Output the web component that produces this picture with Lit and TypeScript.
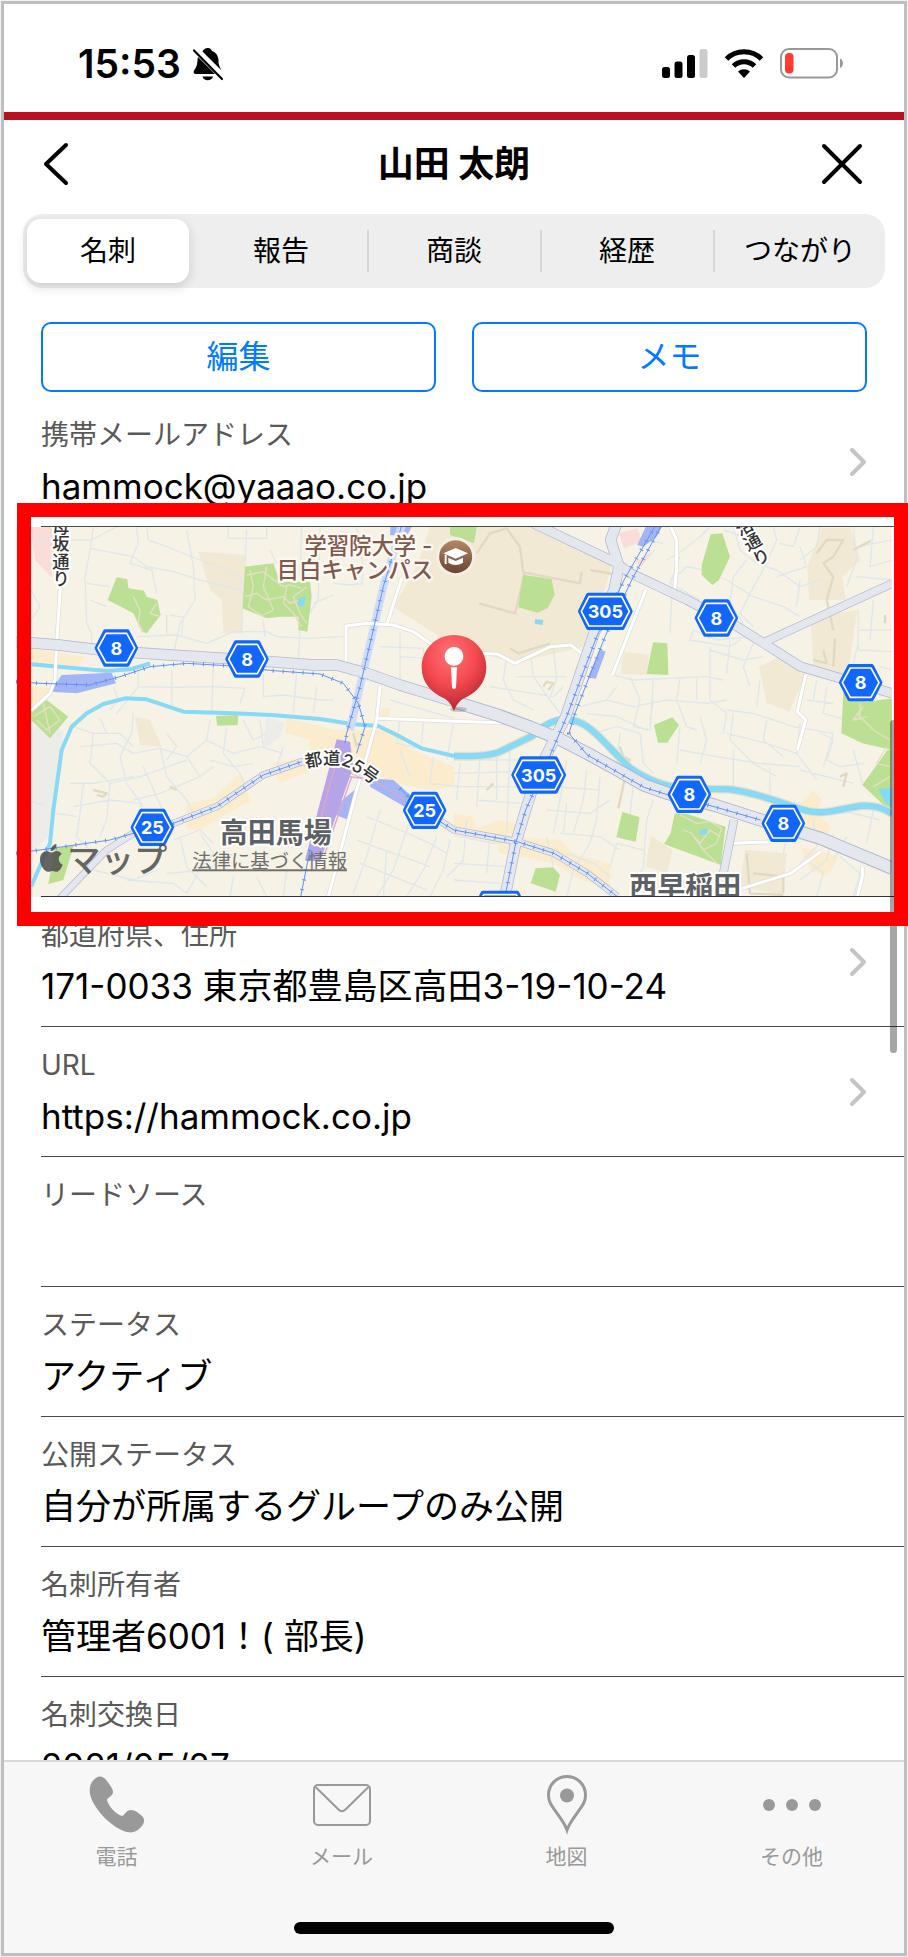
import { LitElement, html, svg, css, nothing } from "lit";
import { customElement, state } from "lit/decorators.js";

interface Field {
  label: string;
  value: string;
  href?: string;
}

interface Shield {
  x: number;
  y: number;
  text: string;
}

const TABS = ["名刺", "報告", "商談", "経歴", "つながり"];

const FIELDS_BEFORE_MAP: Field[] = [
  { label: "携帯メールアドレス", value: "hammock@yaaao.co.jp", href: "mailto:hammock@yaaao.co.jp" },
];

const FIELDS_AFTER_MAP: Field[] = [
  { label: "都道府県、住所", value: "171-0033 東京都豊島区高田3-19-10-24", href: "#address" },
  { label: "URL", value: "https://hammock.co.jp", href: "https://hammock.co.jp" },
  { label: "リードソース", value: "" },
  { label: "ステータス", value: "アクティブ" },
  { label: "公開ステータス", value: "自分が所属するグループのみ公開" },
  { label: "名刺所有者", value: "管理者6001！( 部長)" },
  { label: "名刺交換日", value: "2021/05/27" },
];

const SHIELDS: Shield[] = [
  { x: 349, y: 444, text: "8" },
  { x: 741, y: 477, text: "8" },
  { x: 1816, y: 334, text: "305" },
  { x: 2149, y: 354, text: "8" },
  { x: 2582, y: 548, text: "8" },
  { x: 457, y: 982, text: "25" },
  { x: 1274, y: 931, text: "25" },
  { x: 1616, y: 825, text: "305" },
  { x: 2068, y: 883, text: "8" },
  { x: 2350, y: 970, text: "8" },
  { x: 1500, y: 1228, text: "305" },
];

// Campus and school grounds
const SAND = [
  "M1250 200 1290 81H1600L1835 195 1820 250 1750 440 1547 488 1362 440 1180 320Z",
  "M595 155 740 165 725 400H670L665 300 630 270Z",
  "M2467 85H2552L2582 180 2527 230 2537 300H2427L2422 200Z",
  "M2432 350 2572 330 2540 545 2440 500Z",
  "M2277 500 2340 470 2420 520 2367 635 2300 610Z",
  "M1872 455 1947 465 1942 525 1862 522Z",
  "M405 650 450 660 485 740 420 735Z",
  "M1952 1005 2017 1050 2002 1120 1937 1100Z",
  "M2235 1050 2360 1060 2350 1185 2220 1160Z",
];

// Shopping districts
const ORANGE = [
  "M93 445 255 470 230 505 93 490Z",
  "M93 560 160 565 130 620 93 630Z",
  "M860 655 1010 690 1180 690 1225 745 1362 800V860L1300 870 1180 850 1090 810 960 800 840 850 810 790 925 770 930 720 855 700Z",
  "M560 910 640 895 720 820 740 860 750 905 700 930 600 990 560 985Z",
  "M1362 940 1420 950 1430 985 1500 960 1570 975 1560 1010 1680 1020 1720 1060 1830 1090 1830 1160 1740 1140 1660 1090 1500 1060 1490 1030 1362 1010Z",
  "M2400 910 2440 870 2465 900 2450 940 2495 980 2480 1010 2410 1000Z",
  "M2400 1040 2520 1070 2480 1130 2430 1110Z",
  "M1145 620 1172 625 1168 650 1140 648Z",
];

const PINK = [
  "M93 81H155L162 130 155 232 105 180Z",
  "M1857 100 1912 85 1927 125 1872 145Z",
  "M1907 185 1965 150 1922 202Z",
];

const PARKS = [
  "M350 232 382 238 385 265 432 272 440 290 472 300 482 345 440 400 425 395 400 340 323 300Z",
  "M735 200 820 190 840 245 930 245 935 290 922 395 895 390V350H840L800 355 728 325Z",
  "M1569 224 1655 238 1664 285 1642 325 1612 338 1555 322Z",
  "M2132 103 2167 100 2190 170 2157 240 2137 255 2105 225V195Z",
  "M1959 427 2002 430 2005 525 1940 522Z",
  "M1350 81H1430L1422 130 1350 105Z",
  "M2530 575 2600 605 2677 595V750L2587 730 2524 700Z",
  "M2662 750H2677V940L2587 855Z",
  "M648 648 715 645 713 675 652 677Z",
  "M1962 675 2017 652 2037 675 2002 728 1974 728Z",
  "M1867 935 1919 952 1907 1025 1849 1012Z",
  "M2024 940 2062 942 2177 980 2162 1095 1992 1032 2012 1000Z",
  "M1607 1105 1660 1102 1680 1125 1667 1175 1592 1150Z",
  "M165 1045 222 1035 190 1140 145 1152Z",
  "M93 635 140 600 205 650 150 715 93 660Z",
];

const PARK_PATHS =
  "M740 225 790 215 815 235 850 260 870 255 905 265M735 290 770 280 800 300 850 290 870 310 900 300M750 210 760 260 745 320 790 350M800 200 790 260 820 330 790 345M860 260 850 310 880 340 905 380M920 260 880 290 900 340 920 370M400 290 420 330 415 370 430 395M470 310 450 340 480 350M100 650 150 620 180 660 140 690 110 660M130 610 150 700M2040 945 2090 970 2130 965 2165 985 2150 1030 2110 1050 2075 1000 2050 990M2075 1000 2100 1030 2130 990 2160 1010M2110 1050 2150 1090M2590 620 2560 660 2600 650M2580 610 2580 660M2570 640 2620 690 2670 720M2660 740 2630 790 2670 800M2620 860 2670 830";

// Side streets
const STREETS =
  "M280 81 270 150 255 230 260 370 275 400V440M93 120H230L275 120 350 81M270 145 400 170 440 200 520 215 600 240 725 270M440 81 445 120 500 140 600 180 715 225 730 250 725 400M560 90 580 200 585 300 540 370 520 465M410 81 415 130 390 190 455 210 470 280M685 81V115H800V81M740 90 735 190M810 150 830 190M410 410 530 405 620 430 700 395H800L830 410 920 415 1030 410M510 345 550 352 545 405M500 345V405M790 365 795 410M905 81 900 240M960 81 955 300 900 380 895 480M1000 250 1050 255 1090 250M1000 285 940 310M1070 81 1090 200 1085 260M93 270 120 320 93 360M270 300 320 320M260 250 330 260M415 500V560L520 562 640 560 735 565M515 510V620M640 500 635 640M735 565 720 610M790 520V590L850 585 960 600 1000 600M890 520 880 640M950 560 940 640M340 560 355 600 330 630M415 560 350 640M1200 400V560L1362 590M1140 440 1270 445 1280 520M1200 470 1280 475M1170 600 1362 655M220 680 280 700 360 700 400 740M240 740 350 730 400 760 480 745 560 770 620 720 630 660M280 700 270 790 330 850 420 830 560 780M300 655 320 700M400 640 395 700 360 770 380 850 430 920M210 850 280 850 400 830M220 920 330 900 420 910 430 950M250 850 240 940 230 1010 290 1070M330 850 320 960 300 1010M170 940 230 950M400 900 480 880 600 830 640 800M480 740 500 830 560 900 590 960M560 770 600 830M430 800 470 890 500 960M620 720 700 760 780 740 850 760M680 680 670 760 720 820 740 870M730 660 760 720 800 700M780 660 790 740M850 740 830 800M630 780 700 800 760 790M500 700 530 740 500 780M520 1020 600 990 640 1030M540 1010 560 1100 620 1160M600 1000 640 1060 600 1110 560 1180M500 1120 620 1110 700 1060M380 1140 520 1150 560 1180M280 1110 400 1140 470 1110M700 1130 690 1190M770 1130 800 1190M860 1110 850 1190M1100 950 1200 990 1290 1030 1340 1060M1070 1020 1180 1060 1290 1100M1080 1090 1180 1130 1280 1170M1140 930 1100 1070 1060 1180M1230 960 1180 1110 1130 1190M1310 1010 1270 1110 1220 1190M1350 1020 1330 1110 1290 1190M1160 1050 1150 1190M1200 660 1190 730 1280 750M1270 660 1265 730M1362 660 1340 780M1300 770 1290 850 1380 860M1200 750 1230 830M1380 790 1370 900M1440 770 1430 920M1362 820 1540 815M1362 780 1560 780M1362 860 1560 860M1490 760V900M1530 740 1520 1000M1430 900 1560 910M1380 1010 1480 1030 1560 1020M1400 960 1390 1080 1340 1130M1470 1000 1460 1120M1540 1020 1520 1100 1362 1090M1362 1140 1500 1150M1700 780 1680 900 1660 1000M1760 810 1750 900 1720 1000M1660 860 1800 870M1640 930 1770 940 1830 900M1680 1000 1800 1010 1860 1050M1800 830 1790 960 1770 1030M1770 1030 1720 1110 1700 1190M1700 1060 1780 1090 1830 1130M1640 1010 1660 1100M1900 850 1890 950M1960 900 1940 960 1930 1100 1900 1170M1930 1050 1850 1030 1830 1100M1520 470 1510 540 1540 600 1600 630M1590 450 1600 530 1650 600 1680 640M1660 440 1670 540 1650 590M1550 530 1700 530M1470 560 1660 590 1690 560M1840 525 1900 540 2000 535 2120 530 2170 540M1850 560 1820 600 1740 620M1890 530 1920 600 1900 680 1950 690M1820 600 1900 620 2000 600 2120 610 2180 600M1960 540 1950 690M2040 535 2030 600 2060 680 2090 690M2090 530 2090 600M2130 440 2130 600 2180 640 2170 700M1960 600 1950 660M1760 640 1850 650 1940 690M1780 700 1850 680 1920 700M1860 700 1850 790M1920 700 1930 790 1960 820M2040 680 2030 790M2100 650 2120 720 2100 790M2180 630 2260 640 2380 680 2500 700M2180 700 2300 730 2390 760M2200 640 2190 720 2260 790 2330 830M2300 660 2290 720 2350 770M2400 670 2390 760 2450 840M2450 690 2500 720 2480 780 2520 800 2590 790M2040 750 2150 770 2280 790 2400 800M2200 750 2200 870M2310 800 2310 900M2500 700 2470 800M2400 810 2560 850M2560 750 2590 860M2017 260 2010 400M2040 170 2010 250 2100 300M1940 120 1990 130M2017 240 2060 200 2110 210M2000 180 2050 150 2100 110 2130 81M2200 81 2220 150 2270 190 2330 210 2400 260 2460 240M2105 210 2180 240 2260 290 2350 320 2400 350M2170 90 2230 110M2240 180 2200 230 2190 310 2230 370M2320 81 2330 120 2300 190 2250 280 2220 340 2260 380M2400 81 2380 140 2340 130M2400 140 2420 200 2330 230M2460 81 2450 140 2400 180M2560 81 2570 180 2540 260M2620 81 2610 200 2677 180M2570 230 2677 240M2570 140 2677 120M2400 240 2390 320M2575 330V450L2677 455M2575 390H2677M2620 300 2610 420M2572 440 2560 490M2080 390 2150 420 2250 410 2290 440M2080 390 2070 420 2190 440 2220 420M2190 420 2180 520M2260 430 2230 500 2250 560M2130 450 2230 480 2290 470M2640 500 2677 510M2480 560 2470 640 2540 660M2420 600 2500 610M2450 540 2440 600M2280 540 2270 620M2360 1010 2350 1060M2440 960 2450 1040 2400 1090M2500 1000 2480 1080 2400 1140M2420 1080 2470 1120 2450 1190M2520 1070 2580 1120 2560 1190M2540 1010 2500 1080M2620 930 2600 1030M2560 910 2640 930M2520 930 2640 960M1700 910 1690 1000M93 905 130 915";

const SAND_PATHS =
  "M1437 310 1545 340 1575 218 1740 250 1745 215M1430 160 1470 100 1520 85 1560 140 1570 220M1530 445 1555 460 1650 430M1770 210 1840 222M2450 160 2480 120 2530 120 2500 170 2470 190 2500 230 2480 300 2500 390M2560 150 2612 122M2505 415 2500 500M2440 480 2480 490 2470 450M2655 345V370M1630 560 1640 545 1660 550 1645 570M1860 740 1870 770 1890 780 1860 800 1880 810 1855 925M1480 850 1460 870M280 870 320 880 310 890 290 885M510 860 530 870M1060 700 1070 740M2520 830 2540 820 2530 860M2240 1060 2250 1180 2350 1185M2260 1120 2350 1130 2350 1180";

const RIVER =
  "M93 1160 150 1030 160 930 185 750 215 680 260 640 310 612 375 595 440 598 550 635 700 640 815 645 960 657 1055 672 1135 678 1200 710 1265 745 1362 768";
const RIVER_EAST =
  "M1362 768C1420 770 1470 768 1500 755L1597 708C1640 665 1690 645 1740 668C1790 690 1840 760 1892 805C1950 845 2000 862 2060 866L2192 868C2280 880 2360 915 2412 930C2470 950 2540 920 2592 917 2630 917 2660 930 2677 942";

const ROAD_8_WEST = "M48 425 175 435 320 452 510 465 750 480 940 495H1010L1100 520 1200 555 1362 605";
const ROAD_8_EAST =
  "M1362 605 1492 645 1592 682 1680 718 1762 760 1862 815 1932 855 2002 880 2142 915 2282 960 2462 1015 2677 1105";
const ROAD_MEJIRO = "M1600 70 1842 185 1892 220 2062 300 2212 380 2292 430 2402 500 2522 535 2677 580";
const ROAD_BRANCH = "M2290 428 2677 250";
const ROAD_305 = "M1850 70 1832 120 1857 200 1842 270 1782 400 1697 650 1662 720 1612 820 1577 930 1547 1030 1515 1190";
const ROAD_25 =
  "M175 1200 320 1050 400 1000 520 970 650 920 790 825 905 785 1000 785 1120 840 1270 930 1362 990 1552 1025 1662 1060 1762 1120 1852 1190";
const ROAD_SOUTH = "M2202 960 2168 1130 2160 1200";

const WHITE_ROADS =
  "M183 230 170 430 165 540 150 580 93 632M1205 235 1160 375M1038 490V378L1100 370 1180 375 1240 395 1290 430 1362 455M1362 458 1492 462 1544 490 1652 440 1712 435 1752 465M1140 560 1130 660 1100 770 1070 870 985 1190M1135 655 1362 664 1512 668M1937 270 1837 525M2007 70 2030 120V200L2024 270M2417 525 2392 635 2417 660 2392 750M2200 1030 2322 1025M2227 1165 2372 1120 2462 1055M2587 1100V1130L2572 1190";

const RAILS = [
  "M1207 70 1150 260 1080 560 1040 700 1035 730M930 1050 900 1200",
  "M48 545 120 550 270 555 360 530 450 500 560 490 680 497 820 512 960 522 1030 550 1075 610 1095 680 1070 760",
  "M48 1060 190 1040 330 1020 400 1000 520 970 650 920 790 825 905 785",
  "M1200 865 1270 935 1362 990 1552 1025 1662 1060 1762 1120 1852 1190",
  "M1970 70 1872 240 1790 410 1700 650 1640 790 1577 930 1547 1030 1515 1190",
  "M1988 70 1895 240 1815 410 1725 640 1707 700 1762 765 1862 822 1932 862 2002 884 2142 920 2282 960",
];

@customElement("area-map")
export class AreaMap extends LitElement {
  static styles = css`
    :host {
      display: block;
    }
    .map {
      display: block;
      width: 100%;
      height: auto;
    }
    .land { fill: #f6f2e6; }
    .sand { fill: #f2e9d4; }
    .shops { fill: #fbecce; }
    .pink { fill: #fadcd8; }
    .park { fill: #bbe094; }
    .yard { fill: #ecede9; }
    .water { fill: #87d9f5; }
    .station { fill: #a3b5f5; }
    .terminal { fill: #b5a4e8; }
    .line { fill: none; stroke-linejoin: round; }
    .street { stroke: #dfe7eb; stroke-width: 4; }
    .park-path { stroke: #e6dfc6; stroke-width: 4; }
    .sand-path { stroke: #e1d9c1; stroke-width: 7; }
    .river { stroke: #87d9f5; stroke-width: 12; }
    .bank { stroke: #e6e0cc; stroke-width: 26; }
    .river.wide { stroke-width: 19; }
    .edge { stroke: #acb5d3; }
    .road { stroke: #e4e7ed; }
    .w38 { stroke-width: 40; }
    .w34 { stroke-width: 34; }
    .w30 { stroke-width: 30; }
    .w26 { stroke-width: 26; }
    .w22 { stroke-width: 22; }
    .w18 { stroke-width: 18; }
    .white-edge { stroke: #dcdcdc; stroke-width: 13; }
    .white { stroke: #fff; stroke-width: 9; }
    .corridor { stroke: #cfdcf8; stroke-width: 24; }
    .rail { stroke: #6292f3; stroke-width: 3; }
    .tie { stroke: #6292f3; stroke-width: 12; stroke-dasharray: 3 27; }
    .platform { stroke: #e3a5c5; stroke-width: 4; }
    .shield-outer { fill: #1267fb; stroke: #1267fb; stroke-width: 14; stroke-linejoin: round; }
    .shield-inner { fill: #1267fb; stroke: #fff; stroke-width: 5; stroke-linejoin: round; }
    text {
      font-family: Inter, "Noto Sans CJK JP", sans-serif;
      paint-order: stroke;
      stroke-linejoin: round;
    }
    .shield-text { fill: #fff; font-size: 54px; font-weight: 700; text-anchor: middle; }
    .campus { fill: #80594b; stroke: #fbf8f3; stroke-width: 14; font-size: 67px; font-weight: 500; text-anchor: end; }
    .town { fill: #5d6163; stroke: #fff; stroke-width: 12; font-size: 84px; font-weight: 700; text-anchor: middle; }
    .road-name { fill: #333; stroke: #fff; stroke-width: 12; font-size: 52px; font-weight: 500; }
    .vertical { writing-mode: vertical-rl; }
    .brand { fill: #4b4b49; fill-opacity: 0.85; font-size: 100px; font-weight: 500; }
    .brand-mark { fill: #4b4b49; fill-opacity: 0.85; }
    .legal { fill: #6f6e6a; font-size: 58px; text-decoration: underline; }
    .badge { fill: url(#badge); stroke: #f3eee8; stroke-width: 9; }
    .cap { fill: #fff; }
    .cap-line { fill: none; stroke: #fff; stroke-width: 6; }
    .pin { fill: url(#pin); }
    .pin-shade { fill: #000; fill-opacity: 0.18; }
    .pin-mark { fill: #fff; }
  `;

  private shield(s: Shield) {
    const half = s.text.length > 2 ? 75 : 58;
    const flat = s.text.length > 2 ? 51 : 33;
    const outer = `M${-half} 0 ${-flat} -49H${flat}L${half} 0 ${flat} 49H${-flat}Z`;
    const inner = `M${-half + 3} 0 ${-flat + 2} -44H${flat - 2}L${half - 3} 0 ${flat - 2} 44H${-flat + 2}Z`;
    return svg`
      <g transform="translate(${s.x} ${s.y})">
        <path class="shield-outer" d=${outer}></path>
        <path class="shield-inner" d=${inner}></path>
        <text class="shield-text" x="0" y="20">${s.text}</text>
      </g>`;
  }

  render() {
    const fill = (name: string, list: string[]) => svg`<path class=${name} d=${list.join("")}></path>`;
    const line = (name: string, d: string) => svg`<path class="line ${name}" d=${d}></path>`;
    return html`
      <svg class="map" viewBox="48 81 2628 1110" role="img" aria-label="高田馬場周辺の地図">
        <defs>
          <radialGradient id="pin" cx="0.45" cy="0.25" r="0.8">
            <stop offset="0" stop-color="#ff7377"></stop>
            <stop offset="0.5" stop-color="#f4494f"></stop>
            <stop offset="1" stop-color="#a91f2c"></stop>
          </radialGradient>
          <linearGradient id="badge" x1="0" y1="0" x2="0" y2="1">
            <stop offset="0" stop-color="#b98a68"></stop>
            <stop offset="1" stop-color="#67432e"></stop>
          </linearGradient>
          <path id="name-25" d="M918 804 Q1010 782 1050 806 T1200 915"></path>
        </defs>
        <rect class="land" x="48" y="81" width="2640" height="1110"></rect>
        <path class="yard" d="M93 690 150 650 190 700 165 850 145 1010 93 1060ZM800 650 855 670 840 710 790 750Z"></path>
        ${fill("sand", SAND)} ${fill("shops", ORANGE)} ${fill("pink", PINK)}
        ${line("street", STREETS)} ${line("sand-path", SAND_PATHS)}
        ${fill("park", PARKS)} ${line("park-path", PARK_PATHS)}
        <path class="water" d="M895 295 918 290 910 320 893 315ZM1605 357 1630 360 1628 375 1604 371ZM2098 990 2120 985 2122 1003 2100 1006ZM2635 868 2677 862V925L2655 905Z"></path>
        ${line("bank", RIVER_EAST)} ${line("river", "M93 493 320 513 390 508 450 490")}
        ${line("river", RIVER)} ${line("river wide", RIVER_EAST)}
        <path class="station" d="M185 525 335 518 348 550 230 580 150 575ZM1075 860 985 935 1045 960ZM1172 70H1240L1220 110 1170 105ZM1942 70H1992L1970 110 1930 140 1912 135Z"></path>
        ${line("corridor", "M1207 70 1150 260 1080 560 1050 690")}
        ${line("white-edge", WHITE_ROADS)} ${line("white", WHITE_ROADS)}
        ${line("edge w34", ROAD_8_WEST)} ${line("edge w38", ROAD_8_EAST)} ${line("edge w30", ROAD_MEJIRO)}
        ${line("edge w26", ROAD_BRANCH)} ${line("edge w34", ROAD_305)} ${line("edge w22", ROAD_25)}
        ${line("edge w26", ROAD_SOUTH)}
        ${line("road w30", ROAD_8_WEST)} ${line("road w34", ROAD_8_EAST)} ${line("road w26", ROAD_MEJIRO)}
        ${line("road w22", ROAD_BRANCH)} ${line("road w30", ROAD_305)} ${line("road w18", ROAD_25)}
        ${line("road w22", ROAD_SOUTH)}
        <path class="station" d="M1800 448 1817 455 1787 537 1764 530ZM1110 835 1180 840 1237 890 1222 925 1110 860Z"></path>
        <path class="terminal" d="M1010 718 1050 725 1060 800 960 1085 915 1080Z"></path>
        ${line("platform", "M1015 760 950 1000M1055 830 975 1060M1050 830 1120 840 1215 900")}
        ${RAILS.map((d) => svg`${line("rail", d)}${line("tie", d)}`)}

        ${SHIELDS.map((s) => this.shield(s))}

        <text class="road-name vertical" x="180" y="53">母坂通り</text>
        <text class="road-name vertical" x="0" y="0" transform="translate(2217 58) rotate(-29)">治通り</text>
        <text class="road-name"><textPath href="#name-25">都道25号</textPath></text>
        <text class="campus" x="1297" y="161">学習院大学 -</text>
        <text class="campus" x="1299" y="234">目白キャンパス</text>
        <circle class="badge" cx="1367" cy="170" r="54"></circle>
        <path class="cap" d="M1367 144 1404 160 1367 176 1330 160ZM1345 173 1367 183 1389 173V188Q1367 202 1345 188Z"></path>
        <path class="cap-line" d="M1337 164V192"></path>

        <text class="town" x="827" y="1029">高田馬場</text>
        <text class="town" x="2056" y="1190">西早稲田</text>
        <path
          class="brand-mark"
          d="M169 1032C171 1042 163 1053 152 1054C150 1044 159 1034 169 1032ZM185 1062C172 1070 174 1088 188 1094C182 1110 174 1116 167 1115C160 1112 155 1112 148 1115C134 1119 120 1096 120 1078C120 1058 136 1050 146 1055C152 1058 156 1058 162 1055C170 1051 180 1054 185 1062Z"
        ></path>
        <text class="brand" x="202" y="1115">マップ</text>
        <a href="#legal"><text class="legal" x="577" y="1105">法律に基づく情報</text></a>

        <ellipse class="pin-shade" cx="1375" cy="628" rx="26" ry="8"></ellipse>
        <path
          class="pin"
          d="M1362 405C1416 405 1459 448 1459 502C1459 548 1430 578 1394 594C1378 602 1368 616 1362 634C1356 616 1346 602 1330 594C1294 578 1265 548 1265 502C1265 448 1308 405 1362 405Z"
        ></path>
        <path class="pin-mark" d="M1362 441A28 28 0 1 1 1361.900 441ZM1353 502H1371L1368 563Q1362 570 1356 563Z"></path>
      </svg>
    `;
  }
}

@customElement("app-root")
export class AppRoot extends LitElement {
  @state() private tab = 0;

  static styles = css`
    :host {
      display: block;
      font-family: Inter, "Noto Sans CJK JP", sans-serif;
      color: #000;
    }
    * {
      box-sizing: border-box;
    }
    button {
      font: inherit;
      color: inherit;
      background: none;
      border: 0;
      padding: 0;
      cursor: pointer;
    }
    a {
      color: inherit;
      text-decoration: none;
    }
    svg {
      display: block;
    }
    .shell {
      background: #f2f2f2;
      padding: 1px;
      height: 100vh;
      overflow: clip;
    }
    .screen {
      height: 100%;
      display: flex;
      flex-direction: column;
      border: 3px solid #bfbfbf;
      background: #fff;
    }
    .status {
      display: flex;
      align-items: center;
      height: 116px;
      padding: 12px 60px 0 74px;
      border-bottom: 8px solid #bb1021;
      flex: none;
    }
    .time {
      font-size: 39px;
      line-height: 48px;
      font-weight: 600;
    }
    .bell {
      margin-left: 11px;
    }
    .indicators {
      margin-left: auto;
      display: flex;
      align-items: center;
      gap: 16px;
    }
    .header {
      display: grid;
      grid-template-columns: 64px 1fr 64px;
      align-items: center;
      height: 94px;
      padding: 0 20px 6px;
      flex: none;
    }
    .title {
      margin: 0;
      font-size: 36px;
      line-height: 48px;
      font-weight: 700;
      text-align: center;
    }
    .icon-button {
      display: grid;
      place-items: center;
      height: 64px;
    }
    .back {
      justify-content: start;
      padding-left: 16px;
    }
    .close {
      justify-content: end;
      padding-right: 20px;
    }
    .segments {
      display: grid;
      grid-template-columns: repeat(5, 1fr);
      gap: 11px;
      height: 74px;
      margin: 0 19px;
      padding: 5px 4px;
      border-radius: 20px;
      background: #eee;
      flex: none;
    }
    .segment {
      position: relative;
      border-radius: 14px;
      font-size: 28px;
      line-height: 36px;
    }
    .segment.divided::after {
      content: "";
      position: absolute;
      right: -7px;
      top: 11px;
      bottom: 11px;
      width: 2px;
      background: #d6d6d7;
    }
    .segment.selected {
      background: #fff;
      box-shadow: 0 4px 12px rgba(0, 0, 0, 0.14);
    }
    .actions {
      display: grid;
      grid-template-columns: 1fr 1fr;
      gap: 36px;
      padding: 34px 37px 5px;
      flex: none;
    }
    .action {
      height: 70px;
      border: 2px solid #007aff;
      border-radius: 10px;
      color: #007aff;
      font-size: 32px;
      line-height: 40px;
    }
    .content {
      position: relative;
      flex: 1;
      min-height: 0;
      overflow-x: visible;
      overflow-y: clip;
    }
    .fields {
      list-style: none;
      margin: 0;
      padding: 0;
    }
    .field {
      display: flex;
      align-items: center;
      height: 130px;
      margin-left: 37px;
      padding-right: 36px;
      border-bottom: 1px solid #4a4a4a;
    }
    .body {
      flex: 1;
      display: grid;
      grid-template-rows: 38px 44px;
      gap: 10px;
      white-space: nowrap;
    }
    .label {
      font-size: 28px;
      line-height: 38px;
      color: #595959;
    }
    .value {
      font-size: 35px;
      line-height: 44px;
    }
    .map-item {
      position: relative;
      padding: 0 12px;
    }
    .map-item::before {
      content: "";
      position: absolute;
      left: 37px;
      right: 0;
      bottom: 0;
      height: 1px;
      background: #333;
      z-index: 1;
    }
    .highlight {
      position: absolute;
      inset: -24px -4px -29px 13px;
      border: 14px solid #f00;
      z-index: 3;
      pointer-events: none;
    }
    .scrollbar {
      position: absolute;
      right: 7px;
      top: 323px;
      width: 7px;
      height: 333px;
      border-radius: 4px;
      background: rgba(0, 0, 0, 0.35);
      z-index: 2;
    }
    .dock {
      flex: none;
      border-top: 2px solid #d9d9d9;
      background: #f7f7f7;
      color: #999;
    }
    .dock-items {
      display: grid;
      grid-template-columns: repeat(4, 1fr);
      padding: 12px 0 50px;
    }
    .dock-item {
      display: flex;
      flex-direction: column;
      align-items: center;
      gap: 6px;
      font-size: 21px;
      line-height: 30px;
    }
    .home {
      width: 320px;
      height: 12px;
      margin: 0 auto 19px;
      border-radius: 6px;
      background: #000;
    }
  `;

  private field(f: Field) {
    const body = html`
      <div class="body">
        <div class="label">${f.label}</div>
        <div class="value">${f.value}</div>
      </div>
      ${f.href
        ? html`<svg width="20" height="32" viewBox="0 0 20 32" aria-hidden="true">
            <path d="M4 4 16 16 4 28" fill="none" stroke="#c4c4c6" stroke-width="4" stroke-linecap="round" stroke-linejoin="round"></path>
          </svg>`
        : nothing}
    `;
    return html`<li>${f.href ? html`<a class="field" href=${f.href}>${body}</a>` : html`<div class="field">${body}</div>`}</li>`;
  }

  render() {
    return html`
      <div class="shell">
        <div class="screen">
          <div class="status">
            <span class="time">15:53</span>
            <svg class="bell" width="32" height="34" viewBox="0 0 32 34" aria-label="消音">
              <path d="M16 1C13 1 11 3 10.500 4.500L29 23C28.500 21 27 19 26.500 16V13C26 8 23.500 5 20 4C19 2 18 1 16 1ZM6 10C5 14 6 18 3 22C1 25 1 27 4 27H23ZM10.500 29.500H21C20 34.500 11.500 34.500 10.500 29.500Z"></path>
              <path d="M2 3.500 30 32" stroke="#000" stroke-width="2.200" stroke-linecap="round"></path>
            </svg>
            <div class="indicators">
              <svg width="46" height="30" viewBox="0 0 46 30" aria-label="電波">
                <rect x="0" y="18" width="8" height="11" rx="2.500"></rect>
                <rect x="12.500" y="12.500" width="8" height="16.500" rx="2.500"></rect>
                <rect x="25" y="6" width="8" height="23" rx="2.500"></rect>
                <rect x="37.500" y="0" width="8" height="29" rx="2.500" fill="#ccc"></rect>
              </svg>
              <svg width="40" height="30" viewBox="0 0 40 30" aria-label="Wi-Fi">
                <g fill="none" stroke="#000" stroke-width="5">
                  <path d="M2.500 10A25 25 0 0 1 37.500 10"></path>
                  <path d="M9.500 17A15 15 0 0 1 30.500 17"></path>
                </g>
                <path d="M20 29 14 22.500A9 9 0 0 1 26 22.500Z"></path>
              </svg>
              <svg width="64" height="32" viewBox="0 0 64 32" aria-label="バッテリー残量低下">
                <rect x="1" y="1" width="56" height="28.500" rx="8" fill="none" stroke="#999" stroke-width="2"></rect>
                <rect x="5" y="5" width="8.500" height="20.500" rx="4" fill="#ff3b30"></rect>
                <path d="M60 10.500Q63 12 63 15.200T60 20Z" fill="#999"></path>
              </svg>
            </div>
          </div>

          <header class="header">
            <button class="icon-button back" aria-label="戻る">
              <svg width="32" height="46" viewBox="0 0 32 46">
                <path d="M26 4 6 23 26 42" fill="none" stroke="#000" stroke-width="4" stroke-linecap="round" stroke-linejoin="round"></path>
              </svg>
            </button>
            <h1 class="title">山田 太朗</h1>
            <button class="icon-button close" aria-label="閉じる">
              <svg width="44" height="44" viewBox="0 0 44 44">
                <path d="M4 4 40 40M40 4 4 40" fill="none" stroke="#000" stroke-width="4" stroke-linecap="round"></path>
              </svg>
            </button>
          </header>

          <div class="segments" role="tablist">
            ${TABS.map((name, i) => {
              const selected = i === this.tab;
              const divided = i < TABS.length - 1 && !selected && i + 1 !== this.tab;
              return html`<button
                class="segment ${selected ? "selected" : ""} ${divided ? "divided" : ""}"
                role="tab"
                aria-selected=${selected}
                @click=${() => (this.tab = i)}
              >${name}</button>`;
            })}
          </div>

          <div class="actions">
            <button class="action">編集</button>
            <button class="action">メモ</button>
          </div>

          <main class="content">
            <ul class="fields">
              ${FIELDS_BEFORE_MAP.map((f) => this.field(f))}
              <li class="map-item">
                <area-map></area-map>
                <div class="highlight"></div>
              </li>
              ${FIELDS_AFTER_MAP.map((f) => this.field(f))}
            </ul>
            <div class="scrollbar"></div>
          </main>

          <nav class="dock">
            <div class="dock-items">
              <button class="dock-item">
                <svg width="58" height="62" viewBox="0 0 58 62" aria-hidden="true">
                  <path fill="#999" d="M8 4C12 1 16 3 19 7C22 11 25 15 25 18C25 22 20 23 19 26C20 32 29 41 34 42C37 41 38 36 43 36C47 36 51 39 55 43C57 46 56 50 53 53C49 58 43 60 36 57C22 52 5 34 2 20C1 13 3 7 8 4Z"></path>
                </svg>
                電話
              </button>
              <button class="dock-item">
                <svg width="58" height="62" viewBox="0 0 58 62" aria-hidden="true">
                  <g fill="none" stroke="#999" stroke-width="2">
                    <rect x="1" y="11" width="56" height="40" rx="4"></rect>
                    <path d="M2.500 13 25.500 35.500Q29 39 32.500 35.500L55.500 13"></path>
                  </g>
                </svg>
                メール
              </button>
              <button class="dock-item">
                <svg width="58" height="62" viewBox="0 0 58 62" aria-hidden="true">
                  <path fill="none" stroke="#999" stroke-width="3" d="M29 56C26 47 19 40 14 32C11 28 10.500 24 10.500 21A18.500 18.500 0 0 1 47.500 21C47.500 24 47 28 44 32C39 40 32 47 29 56Z"></path>
                  <circle fill="#999" cx="29" cy="21.500" r="7"></circle>
                </svg>
                地図
              </button>
              <button class="dock-item">
                <svg width="58" height="62" viewBox="0 0 58 62" aria-hidden="true">
                  <g fill="#999">
                    <circle cx="6" cy="31" r="6"></circle>
                    <circle cx="29" cy="31" r="6"></circle>
                    <circle cx="52" cy="31" r="6"></circle>
                  </g>
                </svg>
                その他
              </button>
            </div>
            <div class="home"></div>
          </nav>
        </div>
      </div>
    `;
  }
}
